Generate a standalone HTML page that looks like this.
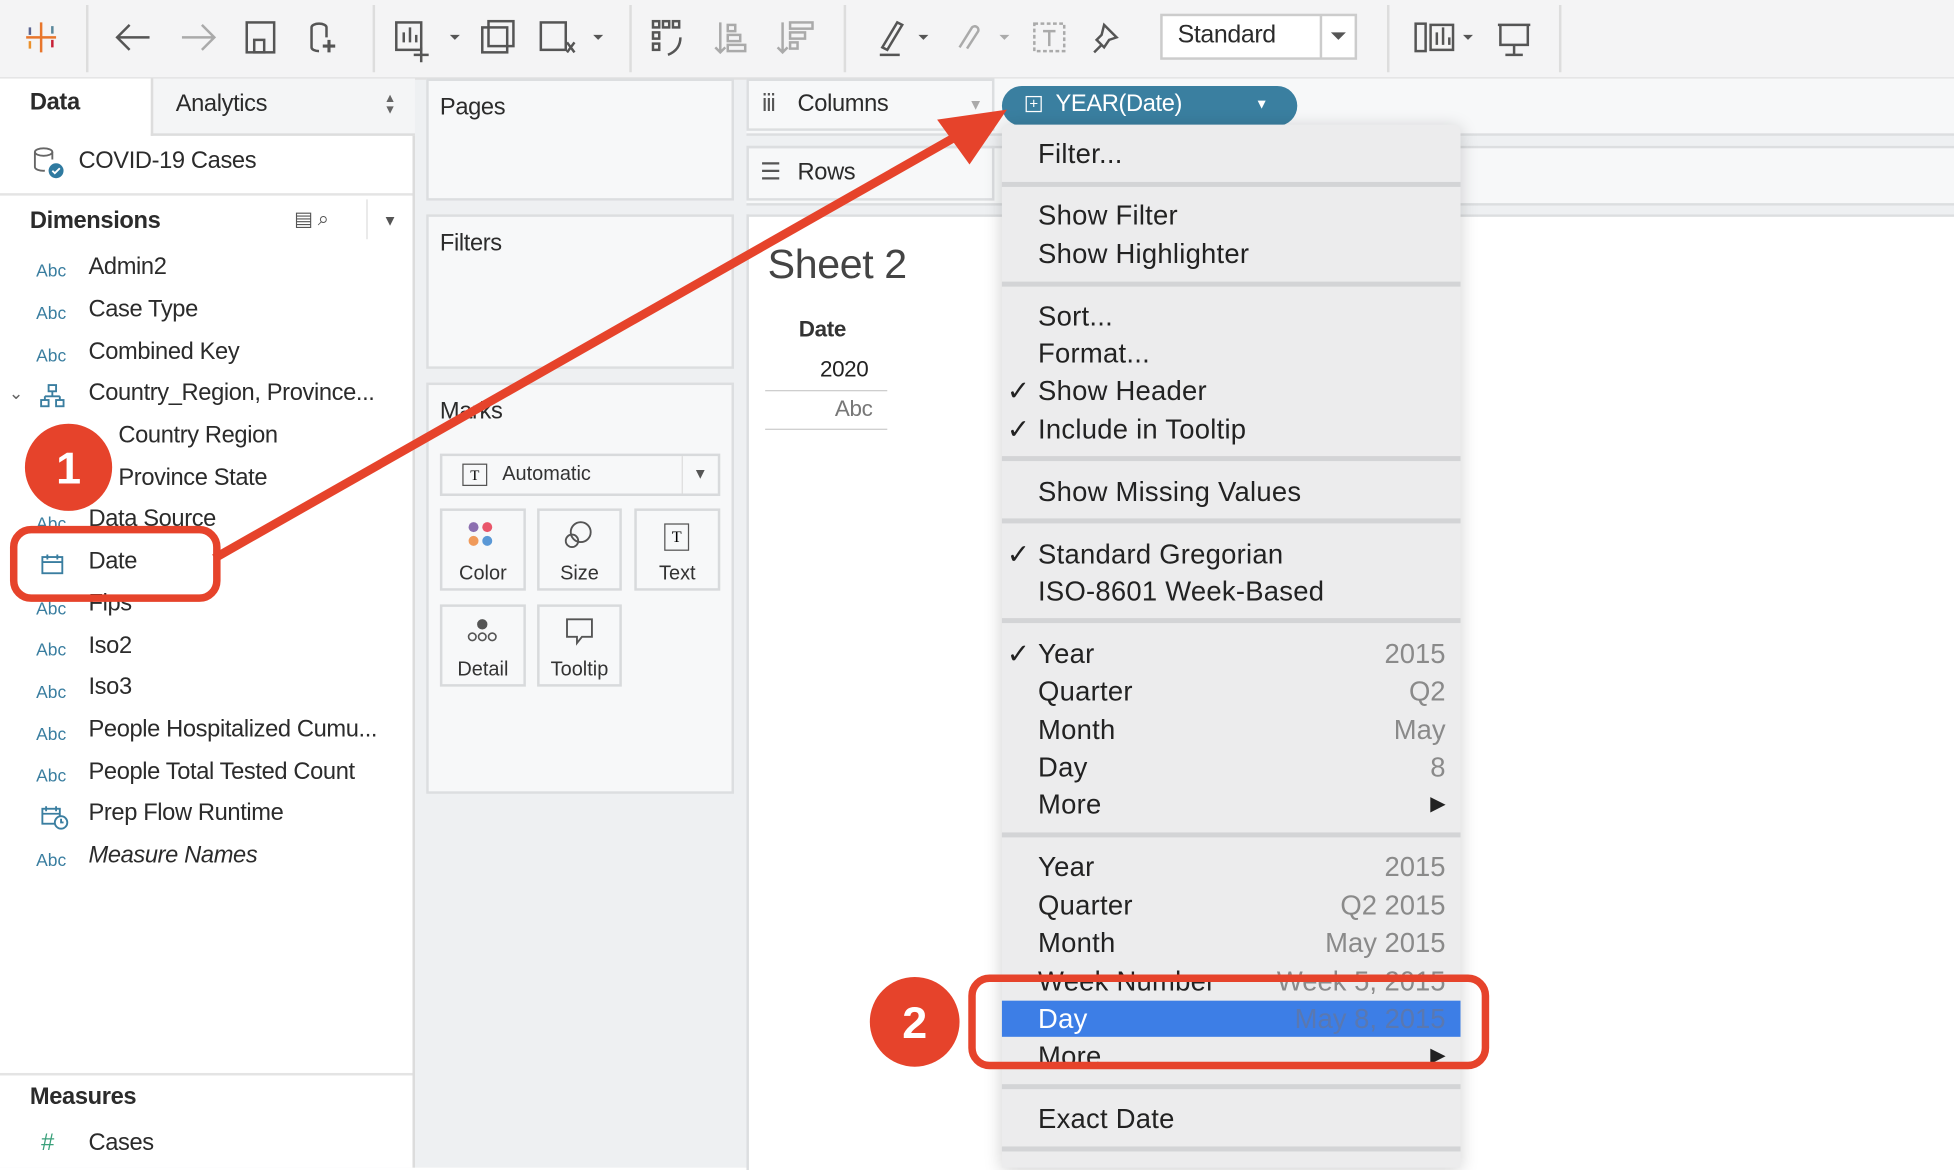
<!DOCTYPE html>
<html><head><meta charset="utf-8"><style>
body{margin:0;width:1954px;height:1168px;overflow:hidden;background:#fff;font-family:"Liberation Sans",sans-serif;}
#s{position:absolute;left:0;top:0;width:1568px;height:937px;transform:scale(1.24617);transform-origin:0 0;background:#eef0f2;}
.a{position:absolute;}
.t{position:absolute;white-space:nowrap;color:#2b2b2b;font-size:19px;letter-spacing:-0.3px;}
.abc{position:absolute;left:29px;font-size:14px;color:#3a7ea0;}
.m{position:absolute;left:833px;font-size:22px;color:#222;line-height:26px;white-space:nowrap;letter-spacing:0.2px}
.r{position:absolute;right:408px;font-size:22px;color:#8a8a8a;line-height:26px;white-space:nowrap;text-align:right}
.sep{position:absolute;left:804px;width:368px;height:4px;background:#d3d4d6;}
.ck{position:absolute;left:808px;font-size:22px;line-height:26px;color:#222}
.card{position:absolute;background:#f7f8f9;border:2px solid #dcdee0;box-sizing:border-box;}
.btn{position:absolute;background:#f7f8f9;border:2px solid #d8dadc;box-sizing:border-box;font-size:16px;color:#333;text-align:center;}
</style></head><body><div id="s">
<!-- toolbar -->
<div class="a" style="left:0;top:0;width:1568px;height:62px;background:#f4f4f5;border-bottom:2px solid #e0e0e0"></div>
<svg class="a" style="left:0;top:0" width="1568" height="62" fill="none" stroke="#555" stroke-width="2">
<g stroke-width="2"><line x1="33" y1="18" x2="33" y2="42" stroke="#e8762c"/><line x1="21" y1="30" x2="45" y2="30" stroke="#e8762c"/><line x1="24" y1="22" x2="24" y2="28" stroke="#5b6591"/><line x1="42" y1="32" x2="42" y2="38" stroke="#c72037"/><line x1="24" y1="33" x2="24" y2="39" stroke="#eb912b"/><line x1="42" y1="21" x2="42" y2="27" stroke="#59879b"/></g>
<line x1="70" y1="4" x2="70" y2="58" stroke="#ddd"/>
<path d="M120 30H94M104 20L94 30L104 40"/><path d="M146 30H172M162 20L172 30L162 40" stroke="#aaa"/>
<rect x="198" y="18" width="22" height="24"/><rect x="204" y="32" width="8" height="10"/>
<path d="M250 22v16a6 3 0 0 0 6 3M250 22a6 3 0 0 1 12 0v8"/><path d="M264 32v10M259 37h10" stroke-width="2.5"/>
<line x1="300" y1="4" x2="300" y2="58" stroke="#ddd"/>
<rect x="318" y="18" width="20" height="22"/><path d="M324 34v-8M329 34v-12M334 34v-6M338 38v12M332 44h12" /><path d="M361 28l4 4 4-4" fill="#555" stroke="none"/>
<rect x="387" y="22" width="20" height="20"/><rect x="392" y="17" width="20" height="20"/>
<rect x="434" y="18" width="20" height="22"/><path d="M455 34l6 8M461 34l-6 8"/><path d="M476 28l4 4 4-4" fill="#555" stroke="none"/>
<line x1="506" y1="4" x2="506" y2="58" stroke="#ddd"/>
<rect x="524" y="17" width="5" height="5"/><rect x="532" y="17" width="5" height="5"/><rect x="540" y="17" width="5" height="5"/><rect x="524" y="26" width="5" height="5"/><rect x="524" y="35" width="5" height="5"/><path d="M536 44q10-4 10-14"/>
<g stroke="#aaa"><path d="M578 18v24M574 38l4 4 4-4"/><rect x="584" y="20" width="6" height="5"/><rect x="584" y="28" width="10" height="5"/><rect x="584" y="36" width="14" height="5"/>
<path d="M628 18v24M624 38l4 4 4-4"/><rect x="634" y="18" width="18" height="5"/><rect x="634" y="26" width="12" height="5"/><rect x="634" y="34" width="6" height="5"/></g>
<line x1="678" y1="4" x2="678" y2="58" stroke="#ddd"/>
<path d="M708 38l12-20 4 2-12 20z M706 44h16"/><path d="M737 28l4 4 4-4" fill="#555" stroke="none"/>
<path d="M770 38l10-16a3 3 0 0 1 5 3l-9 14" stroke="#aaa"/><path d="M802 28l4 4 4-4" fill="#aaa" stroke="none"/>
<rect x="830" y="19" width="24" height="22" stroke="#aaa" stroke-dasharray="3 2"/><path d="M837 25h10M842 25v12" stroke="#aaa"/>
<path d="M886 20l10 10-6 2-4 6-6-6 4-4z M884 36l-6 6"/>
<rect x="932" y="12" width="156" height="35" fill="#fff" stroke="#ccc"/><line x1="1060" y1="12" x2="1060" y2="47" stroke="#ccc"/><path d="M1068 26l6 6 6-6z" fill="#555" stroke="none"/>
<line x1="1114" y1="4" x2="1114" y2="58" stroke="#ddd"/>
<rect x="1136" y="19" width="8" height="22"/><path d="M1148 40v-20h18v20zM1153 36v-10M1158 36v-14M1163 36v-6"/><path d="M1174 28l4 4 4-4" fill="#555" stroke="none"/>
<path d="M1202 20h26M1204 20v16h22v-16M1215 36v8M1208 44h14"/>
<line x1="1252" y1="4" x2="1252" y2="58" stroke="#ddd"/>
</svg>
<div class="t" style="left:945px;top:17px;font-size:20px">Standard</div>
<!-- left pane -->
<div class="a" style="left:0;top:63px;width:331px;height:874px;background:#fff;border-right:2px solid #dcdcdc"></div>
<div class="a" style="left:121px;top:63px;width:210px;height:44px;background:#f4f5f6;border-left:2px solid #ddd;border-bottom:2px solid #ddd"></div>
<div class="t" style="left:24px;top:72px;font-weight:bold">Data</div>
<div class="t" style="left:141px;top:73px">Analytics</div>
<div class="t" style="left:308px;top:75px;font-size:10px;color:#666;line-height:9px">▲<br>▼</div>
<svg class="a" style="left:25px;top:117px" width="28" height="28" fill="none" stroke="#666" stroke-width="1.5"><ellipse cx="10" cy="5" rx="7" ry="3"/><path d="M3 5v12a7 3 0 0 0 8 3M17 5v6"/><circle cx="20" cy="20" r="6" fill="#2f7aa0" stroke="none"/><path d="M17 20l2 2 4-4" stroke="#fff"/></svg>
<div class="t" style="left:63px;top:119px">COVID-19 Cases</div>
<div class="a" style="left:0;top:155px;width:331px;height:2px;background:#e4e4e4"></div>
<div class="t" style="left:24px;top:167px;font-weight:bold">Dimensions</div>
<div class="t" style="left:236px;top:166px;font-size:16px;color:#555">▤ ⌕</div>
<div class="a" style="left:294px;top:160px;width:1px;height:32px;background:#ddd"></div>
<div class="t" style="left:307px;top:170px;font-size:12px;color:#555">▼</div>
<div class="abc" style="top:209px">Abc</div><div class="t" style="left:71px;top:204px">Admin2</div>
<div class="abc" style="top:243px">Abc</div><div class="t" style="left:71px;top:238px">Case Type</div>
<div class="abc" style="top:277px">Abc</div><div class="t" style="left:71px;top:272px">Combined Key</div>
<div class="t" style="left:7px;top:307px;font-size:14px;color:#666">⌄</div>
<svg class="a" style="left:32px;top:308px" width="20" height="20" fill="none" stroke="#3a7ea0" stroke-width="1.5"><rect x="7" y="1" width="6" height="5"/><path d="M10 6v4M4 10h12M4 10v3M16 10v3"/><rect x="1" y="13" width="6" height="5"/><rect x="13" y="13" width="6" height="5"/></svg>
<div class="t" style="left:71px;top:305px">Country_Region, Province...</div>
<div class="t" style="left:95px;top:339px">Country Region</div>
<div class="t" style="left:95px;top:373px">Province State</div>
<div class="abc" style="top:412px">Abc</div><div class="t" style="left:71px;top:406px">Data Source</div>
<svg class="a" style="left:32px;top:443px" width="20" height="20" fill="none" stroke="#3a7ea0" stroke-width="1.5"><rect x="2" y="4" width="16" height="13"/><path d="M2 8h16M6 2v4M14 2v4"/></svg>
<div class="t" style="left:71px;top:440px">Date</div>
<div class="abc" style="top:480px">Abc</div><div class="t" style="left:71px;top:474px">Fips</div>
<div class="abc" style="top:513px">Abc</div><div class="t" style="left:71px;top:508px">Iso2</div>
<div class="abc" style="top:547px">Abc</div><div class="t" style="left:71px;top:541px">Iso3</div>
<div class="abc" style="top:581px">Abc</div><div class="t" style="left:71px;top:575px">People Hospitalized Cumu...</div>
<div class="abc" style="top:614px">Abc</div><div class="t" style="left:71px;top:609px">People Total Tested Count</div>
<svg class="a" style="left:32px;top:645px" width="24" height="22" fill="none" stroke="#3a7ea0" stroke-width="1.5"><rect x="2" y="4" width="14" height="12"/><path d="M2 8h14M5 2v4M13 2v4"/><circle cx="17" cy="15" r="5" fill="#fff"/><path d="M17 12v3h2"/></svg>
<div class="t" style="left:71px;top:642px">Prep Flow Runtime</div>
<div class="abc" style="top:682px">Abc</div><div class="t" style="left:71px;top:676px;font-style:italic">Measure Names</div>
<div class="a" style="left:0;top:861px;width:331px;height:2px;background:#e4e4e4"></div>
<div class="t" style="left:24px;top:870px;font-weight:bold">Measures</div>
<div class="t" style="left:33px;top:907px;color:#3aa07a">#</div><div class="t" style="left:71px;top:907px">Cases</div>
<!-- middle cards -->
<div class="card" style="left:342px;top:63px;width:247px;height:98px"></div>
<div class="t" style="left:353px;top:76px">Pages</div>
<div class="card" style="left:342px;top:172px;width:247px;height:124px"></div>
<div class="t" style="left:353px;top:185px">Filters</div>
<div class="card" style="left:342px;top:307px;width:247px;height:330px"></div>
<div class="t" style="left:353px;top:320px">Marks</div>
<div class="btn" style="left:353px;top:364px;width:225px;height:34px;text-align:left;padding:6px 0 0 48px">Automatic</div>
<div class="a" style="left:547px;top:366px;width:1px;height:30px;background:#ddd"></div>
<div class="t" style="left:556px;top:373px;font-size:12px;color:#555">▼</div>
<div class="a" style="left:371px;top:372px;width:18px;height:16px;border:1.5px solid #555;font-size:12px;text-align:center;line-height:16px;font-family:'Liberation Serif',serif">T</div>
<div class="btn" style="left:353px;top:408px;width:69px;height:66px;padding-top:42px">Color</div>
<svg class="a" style="left:374px;top:418px" width="24" height="24"><circle cx="6" cy="5" r="4" fill="#8c6fb0"/><circle cx="17" cy="5" r="4" fill="#e9566a"/><circle cx="6" cy="16" r="4" fill="#f09a5a"/><circle cx="17" cy="16" r="4" fill="#5a98d6"/></svg>
<div class="btn" style="left:431px;top:408px;width:68px;height:66px;padding-top:42px">Size</div>
<svg class="a" style="left:452px;top:417px" width="26" height="26" fill="none" stroke="#555" stroke-width="1.5"><circle cx="14" cy="10" r="8"/><circle cx="7" cy="17" r="5"/></svg>
<div class="btn" style="left:509px;top:408px;width:69px;height:66px;padding-top:42px">Text</div>
<div class="a" style="left:533px;top:420px;width:18px;height:20px;border:1.5px solid #555;font-size:13px;text-align:center;line-height:20px;font-family:'Liberation Serif',serif">T</div>
<div class="btn" style="left:353px;top:485px;width:69px;height:66px;padding-top:42px">Detail</div>
<svg class="a" style="left:372px;top:496px" width="30" height="22" fill="none" stroke="#555" stroke-width="1.3"><circle cx="15" cy="5" r="3.5" fill="#555"/><circle cx="7" cy="15" r="3"/><circle cx="15" cy="15" r="3"/><circle cx="23" cy="15" r="3"/></svg>
<div class="btn" style="left:431px;top:485px;width:68px;height:66px;padding-top:42px">Tooltip</div>
<svg class="a" style="left:453px;top:495px" width="24" height="24" fill="none" stroke="#555" stroke-width="1.5"><path d="M2 2h20v14h-8l-4 5v-5H2z"/></svg>
<!-- shelves -->
<div class="a" style="left:599px;top:63px;width:969px;height:44px;background:#f7f8f9;border-bottom:2px solid #dcdee0"></div>
<div class="a" style="left:599px;top:63px;width:199px;height:42px;border:2px solid #dcdee0;box-sizing:border-box;background:#f7f8f9"></div>
<div class="t" style="left:611px;top:72px;color:#555">ⅲ</div><div class="t" style="left:640px;top:73px">Columns</div>
<div class="t" style="left:777px;top:77px;font-size:12px;color:#aaa">▼</div>
<div class="a" style="left:599px;top:117px;width:969px;height:44px;background:#f7f8f9;border-bottom:2px solid #dcdee0;border-top:2px solid #dcdee0"></div>
<div class="a" style="left:599px;top:117px;width:199px;height:44px;border:2px solid #dcdee0;box-sizing:border-box"></div>
<div class="t" style="left:610px;top:127px;color:#555">☰</div><div class="t" style="left:640px;top:128px">Rows</div>
<div class="a" style="left:804px;top:69px;width:237px;height:32px;border-radius:16px;background:#3a7fa0"></div>
<div class="a" style="left:823px;top:77px;width:13px;height:13px;border:1.5px solid #fff;box-sizing:border-box;color:#fff;font-size:12px;line-height:10px;text-align:center">+</div>
<div class="t" style="left:847px;top:73px;color:#fff">YEAR(Date)</div>
<div class="t" style="left:1007px;top:78px;font-size:11px;color:#fff">▼</div>
<!-- sheet -->
<div class="a" style="left:599px;top:172px;width:969px;height:765px;background:#fff;border-left:2px solid #dcdee0;border-top:2px solid #dcdee0"></div>
<div class="t" style="left:616px;top:193px;font-size:33px;color:#444">Sheet 2</div>
<div class="t" style="left:641px;top:254px;font-weight:bold;font-size:18px;color:#333">Date</div>
<div class="t" style="left:658px;top:286px;font-size:18px;color:#222">2020</div>
<div class="a" style="left:614px;top:313px;width:98px;height:1px;background:#ccc"></div>
<div class="t" style="left:670px;top:318px;font-size:18px;color:#777">Abc</div>
<div class="a" style="left:614px;top:344px;width:98px;height:1px;background:#ccc"></div>
<!-- menu -->
<div class="a" style="left:804px;top:100px;width:368px;height:837px;background:#ececed;border-radius:6px 6px 0 0;box-shadow:0 2px 14px rgba(0,0,0,0.18)"></div>
<div class="sep" style="top:146px"></div><div class="sep" style="top:226px"></div><div class="sep" style="top:366px"></div><div class="sep" style="top:416px"></div><div class="sep" style="top:496px"></div><div class="sep" style="top:668px"></div><div class="sep" style="top:870px"></div><div class="sep" style="top:920px"></div>
<div class="a" style="left:804px;top:803px;width:368px;height:29px;background:#3d7ee6"></div>
<div class="m" style="top:111px">Filter...</div>
<div class="m" style="top:160px">Show Filter</div>
<div class="m" style="top:191px">Show Highlighter</div>
<div class="m" style="top:241px">Sort...</div>
<div class="m" style="top:271px">Format...</div>
<div class="ck" style="top:301px">✓</div><div class="m" style="top:301px">Show Header</div>
<div class="ck" style="top:332px">✓</div><div class="m" style="top:332px">Include in Tooltip</div>
<div class="m" style="top:382px">Show Missing Values</div>
<div class="ck" style="top:432px">✓</div><div class="m" style="top:432px">Standard Gregorian</div>
<div class="m" style="top:462px">ISO-8601 Week-Based</div>
<div class="ck" style="top:512px">✓</div><div class="m" style="top:512px">Year</div><div class="r" style="top:512px">2015</div>
<div class="m" style="top:542px">Quarter</div><div class="r" style="top:542px">Q2</div>
<div class="m" style="top:573px">Month</div><div class="r" style="top:573px">May</div>
<div class="m" style="top:603px">Day</div><div class="r" style="top:603px">8</div>
<div class="m" style="top:633px">More</div><div class="r" style="top:633px;color:#222;font-size:16px">▶</div>
<div class="m" style="top:683px">Year</div><div class="r" style="top:683px">2015</div>
<div class="m" style="top:714px">Quarter</div><div class="r" style="top:714px">Q2 2015</div>
<div class="m" style="top:744px">Month</div><div class="r" style="top:744px">May 2015</div>
<div class="m" style="top:775px">Week Number</div><div class="r" style="top:775px">Week 5, 2015</div>
<div class="m" style="top:805px;color:#fff">Day</div><div class="r" style="top:805px;color:#5a78b0">May 8, 2015</div>
<div class="m" style="top:835px">More</div><div class="r" style="top:835px;color:#222;font-size:16px">▶</div>
<div class="m" style="top:885px">Exact Date</div>
<!-- annotations -->
<svg class="a" style="left:0;top:0" width="1568" height="937" fill="none">
<line x1="172" y1="448" x2="770" y2="108" stroke="#e6432b" stroke-width="7"/>
<path d="M808 88L752 96L778 132Z" fill="#e6432b"/>
<rect x="11" y="425" width="163" height="55" rx="14" stroke="#e6432b" stroke-width="6"/>
<rect x="780" y="785" width="412" height="70" rx="14" stroke="#e6432b" stroke-width="6"/>
<circle cx="55" cy="375" r="35" fill="#e6432b"/>
<circle cx="734" cy="820" r="36" fill="#e6432b"/>
<text x="55" y="388" fill="#fff" font-size="36" font-weight="bold" text-anchor="middle" font-family="Liberation Sans,sans-serif">1</text>
<text x="734" y="833" fill="#fff" font-size="36" font-weight="bold" text-anchor="middle" font-family="Liberation Sans,sans-serif">2</text>
</svg>
</div></body></html>
